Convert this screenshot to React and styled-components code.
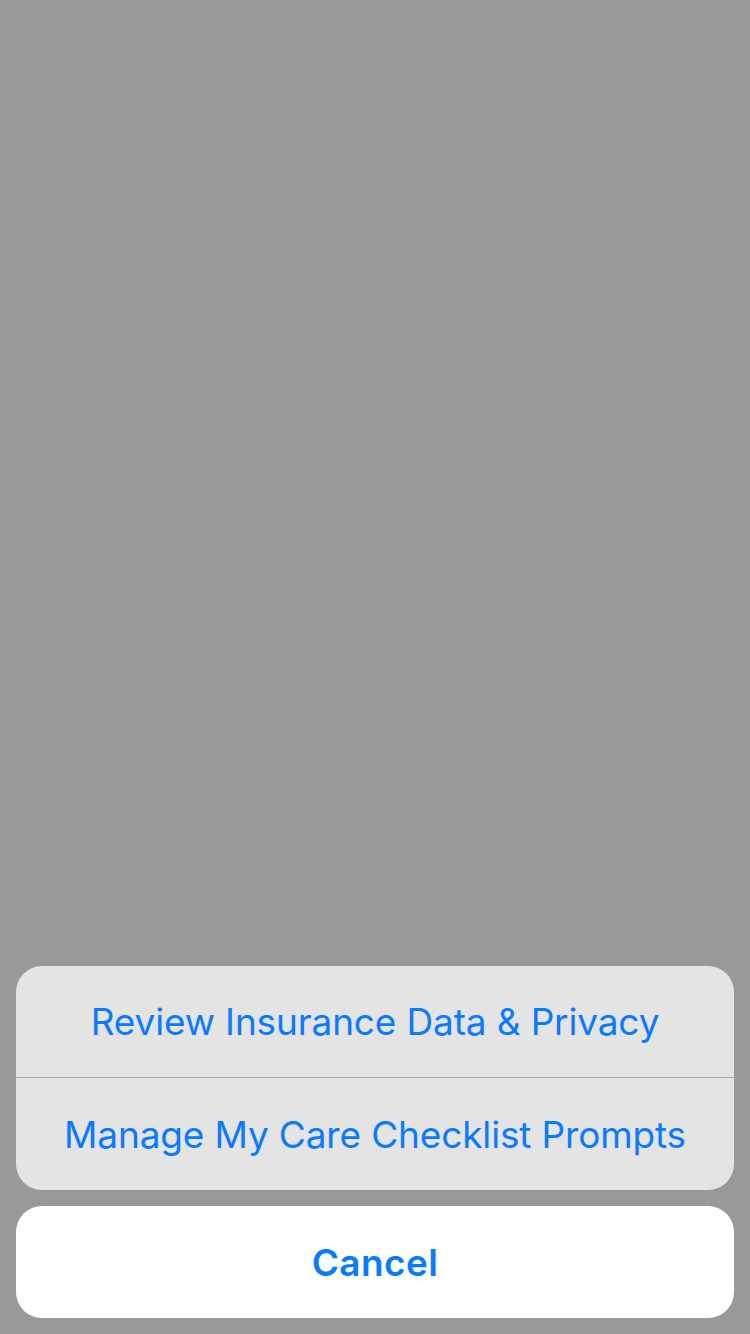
import React from "react";
import styled, { createGlobalStyle } from "styled-components";

const Global = createGlobalStyle`
  html, body { margin: 0; padding: 0; }
  body { background: #999999; font-family: "Inter", "Roboto", "Liberation Sans", sans-serif; }
`;

const Screen = styled.div`
  height: 1334px;
  box-sizing: border-box;
  display: flex;
  flex-direction: column;
  justify-content: flex-end;
  gap: 16px;
  padding: 0 16px 16px;
`;

const Group = styled.div`
  background: #e4e4e4;
  border-radius: 26px;
  overflow: hidden;
  display: flex;
  flex-direction: column;
`;

const Action = styled.div`
  height: ${(p) => p.$h || 112}px;
  display: flex;
  align-items: center;
  justify-content: center;
  color: #0a7aff;
  font-size: 37px;
  font-weight: ${(p) => (p.$bold ? 600 : 400)};
  letter-spacing: ${(p) => (p.$bold ? "0.4px" : "-0.15px")};
  background: ${(p) => (p.$white ? "#ffffff" : "transparent")};
  border-radius: ${(p) => (p.$white ? "26px" : "0")};
`;

const Divider = styled.div`
  height: 1px;
  background: #a9a9a9;
`;

export default function App() {
  return (
    <>
      <Global />
      <Screen>
        <Group>
          <Action $h={111}>Review Insurance Data &amp; Privacy</Action>
          <Divider />
          <Action $h={112}>Manage My Care Checklist Prompts</Action>
        </Group>
        <Action $white $bold>Cancel</Action>
      </Screen>
    </>
  );
}
